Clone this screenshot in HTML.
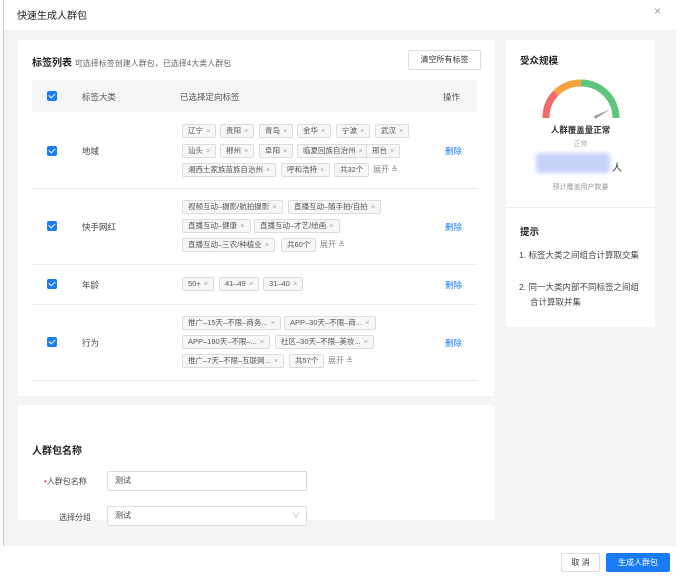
<!DOCTYPE html>
<html><head><meta charset="utf-8"><style>
*{box-sizing:border-box;margin:0;padding:0}
body{width:680px;height:588px;background:#fff;font-family:"Liberation Sans","Noto Sans CJK SC",sans-serif;color:#333;position:relative;overflow:hidden}
.a{position:absolute}
.tag{position:absolute;height:14px;border:1px solid #ddd;border-radius:2px;background:#f7f7f8;font-size:7.5px;line-height:12px;padding:0 5px;color:#555;white-space:nowrap}
.tag i{font-style:normal;color:#aaa;margin-left:3px}
.cb{position:absolute;left:47px;width:10px;height:10px;background:#1a7cf5;border-radius:2px}
.cb:after{content:"";position:absolute;left:3px;top:1px;width:3px;height:5px;border:solid #fff;border-width:0 1.5px 1.5px 0;transform:rotate(45deg)}
.lbl{position:absolute;left:82px;font-size:8.5px;color:#444}
.del{position:absolute;left:445px;font-size:8.5px;color:#1a7cf5}
.more{position:absolute;font-size:8px;color:#888}
.sep{position:absolute;left:32px;width:445px;height:1px;background:#eee}
.hint{position:absolute;left:519px;width:120px;font-size:8.5px;line-height:15px;color:#444;padding-left:11px;text-indent:-11px}
</style></head><body>
<div class="a" style="left:3px;top:0;width:1px;height:546px;background:#ccc"></div>
<div class="a" style="left:17px;top:7px;font-size:10px;color:#222">快速生成人群包</div>
<div class="a" style="left:654px;top:4px;font-size:12px;color:#999">×</div>
<div class="a" style="left:4px;top:30px;width:672px;height:516px;background:#f4f5f7"></div>
<div class="a" style="left:4px;top:546px;width:672px;height:30px;background:#fff"></div>

<div class="a" style="left:18px;top:40px;width:477px;height:356px;background:#fff;border-radius:2px"></div>
<div class="a" style="left:32px;top:54px;font-size:10px;font-weight:bold;color:#222">标签列表 <span style="font-weight:normal;font-size:8px;color:#666">可选择标签创建人群包，已选择4大类人群包</span></div>
<div class="a" style="left:408px;top:50px;width:73px;height:20px;border:1px solid #ddd;border-radius:2px;font-size:8px;line-height:18px;text-align:center;color:#333">清空所有标签</div>
<div class="a" style="left:32px;top:80px;width:445px;height:32px;background:#f5f6f8"></div>
<div class="cb" style="top:91px"></div>
<div class="lbl" style="top:91px;color:#555">标签大类</div>
<div class="lbl" style="left:180px;top:91px;color:#555">已选择定向标签</div>
<div class="lbl" style="left:443px;top:91px;color:#555">操作</div>

<div class="cb" style="top:146px"></div><div class="lbl" style="top:145px">地域</div><div class="del" style="top:145px">删除</div>
<div class="tag" style="left:182px;top:124px">辽宁<i>×</i></div>
<div class="tag" style="left:220px;top:124px">贵阳<i>×</i></div>
<div class="tag" style="left:259px;top:124px">青岛<i>×</i></div>
<div class="tag" style="left:297px;top:124px">金华<i>×</i></div>
<div class="tag" style="left:336px;top:124px">宁波<i>×</i></div>
<div class="tag" style="left:375px;top:124px">武汉<i>×</i></div>
<div class="tag" style="left:182px;top:144px">汕头<i>×</i></div>
<div class="tag" style="left:220px;top:144px">郴州<i>×</i></div>
<div class="tag" style="left:259px;top:144px">阜阳<i>×</i></div>
<div class="tag" style="left:297px;top:144px">临夏回族自治州<i>×</i></div>
<div class="tag" style="left:366px;top:144px">邢台<i>×</i></div>
<div class="tag" style="left:182px;top:163px">湘西土家族苗族自治州<i>×</i></div>
<div class="tag" style="left:281px;top:163px">呼和浩特<i>×</i></div>
<div class="tag" style="left:334px;top:163px">共32个</div>
<div class="more" style="left:373px;top:164px">展开 ≚</div>
<div class="sep" style="top:188px"></div>

<div class="cb" style="top:221px"></div><div class="lbl" style="top:221px">快手网红</div><div class="del" style="top:221px">删除</div>
<div class="tag" style="left:182px;top:200px">视频互动–摄影/航拍摄影<i>×</i></div>
<div class="tag" style="left:288px;top:200px">直播互动–随手拍/自拍<i>×</i></div>
<div class="tag" style="left:182px;top:219px">直播互动–健康<i>×</i></div>
<div class="tag" style="left:254px;top:219px">直播互动–才艺/绘画<i>×</i></div>
<div class="tag" style="left:182px;top:238px">直播互动–三农/种植业<i>×</i></div>
<div class="tag" style="left:281px;top:238px">共60个</div>
<div class="more" style="left:320px;top:239px">展开 ≚</div>
<div class="sep" style="top:264px"></div>

<div class="cb" style="top:279px"></div><div class="lbl" style="top:279px">年龄</div><div class="del" style="top:279px">删除</div>
<div class="tag" style="left:182px;top:277px">50+<i>×</i></div>
<div class="tag" style="left:219px;top:277px">41–49<i>×</i></div>
<div class="tag" style="left:263px;top:277px">31–40<i>×</i></div>
<div class="sep" style="top:304px"></div>

<div class="cb" style="top:337px"></div><div class="lbl" style="top:337px">行为</div><div class="del" style="top:337px">删除</div>
<div class="tag" style="left:182px;top:316px">推广–15天–不限–商务...<i>×</i></div>
<div class="tag" style="left:284px;top:316px">APP–30天–不限–商...<i>×</i></div>
<div class="tag" style="left:182px;top:335px">APP–180天–不限–...<i>×</i></div>
<div class="tag" style="left:275px;top:335px">社区–30天–不限–美妆...<i>×</i></div>
<div class="tag" style="left:182px;top:354px">推广–7天–不限–互联网...<i>×</i></div>
<div class="tag" style="left:289px;top:354px">共57个</div>
<div class="more" style="left:328px;top:355px">展开 ≚</div>
<div class="sep" style="top:380px"></div>

<div class="a" style="left:18px;top:405px;width:477px;height:115px;background:#fff;border-radius:2px"></div>
<div class="a" style="left:32px;top:442px;font-size:10px;font-weight:bold;color:#222">人群包名称</div>
<div class="a" style="left:44px;top:476px;font-size:8px;color:#444"><span style="color:#e33">•</span>人群包名称</div>
<div class="a" style="left:107px;top:471px;width:200px;height:20px;border:1px solid #ddd;border-radius:2px;background:#fff;font-size:8px;line-height:18px;padding-left:7px;color:#444">测试</div>
<div class="a" style="left:59px;top:512px;font-size:8px;color:#444">选择分组</div>
<div class="a" style="left:107px;top:506px;width:200px;height:20px;border:1px solid #ddd;border-radius:2px;background:#fff;font-size:8px;line-height:18px;padding-left:7px;color:#444">测试<span style="position:absolute;right:6px;color:#bbb">∨</span></div>

<div class="a" style="left:506px;top:40px;width:149px;height:287px;background:#fff;border-radius:2px"></div>
<div class="a" style="left:506px;top:207px;width:149px;height:1px;background:#eee"></div>
<div class="a" style="left:520px;top:53px;font-size:9.5px;font-weight:bold;color:#222">受众规模</div>
<svg class="a" style="left:540px;top:76px" width="82" height="44" viewBox="0 0 82 44">
<path d="M6 42 A35 35 0 0 1 16 17" fill="none" stroke="#f26b6b" stroke-width="7"/>
<path d="M16 17 A35 35 0 0 1 41 7" fill="none" stroke="#f5a33c" stroke-width="7"/>
<path d="M41 7 A35 35 0 0 1 76 42" fill="none" stroke="#5fc47c" stroke-width="7"/>
<path d="M54 40 L71 33 L55 43 Z" fill="#9aa0ab"/>
</svg>
<div class="a" style="left:506px;top:124px;width:149px;text-align:center;font-size:8.5px;font-weight:bold;color:#333">人群覆盖量正常</div>
<div class="a" style="left:506px;top:139px;width:149px;text-align:center;font-size:7px;color:#aaa">正常</div>
<div class="a" style="left:536px;top:153px;width:74px;height:20px;background:#c7d2f8;border-radius:3px;filter:blur(2px)"></div>
<div class="a" style="left:612px;top:159px;font-size:10px;color:#333">人</div>
<div class="a" style="left:506px;top:182px;width:149px;text-align:center;font-size:7px;color:#999">预计覆盖用户数量</div>
<div class="a" style="left:520px;top:224px;font-size:9.5px;font-weight:bold;color:#222">提示</div>
<div class="hint" style="top:248px">1. 标签大类之间组合计算取交集</div>
<div class="hint" style="top:280px">2. 同一大类内部不同标签之间组合计算取并集</div>

<div class="a" style="left:561px;top:553px;width:39px;height:19px;border:1px solid #ddd;border-radius:2px;font-size:8px;line-height:17px;text-align:center;color:#333">取 消</div>
<div class="a" style="left:606px;top:553px;width:64px;height:19px;background:#1a7cf5;border-radius:2px;font-size:8px;line-height:19px;text-align:center;color:#fff">生成人群包</div>
</body></html>
